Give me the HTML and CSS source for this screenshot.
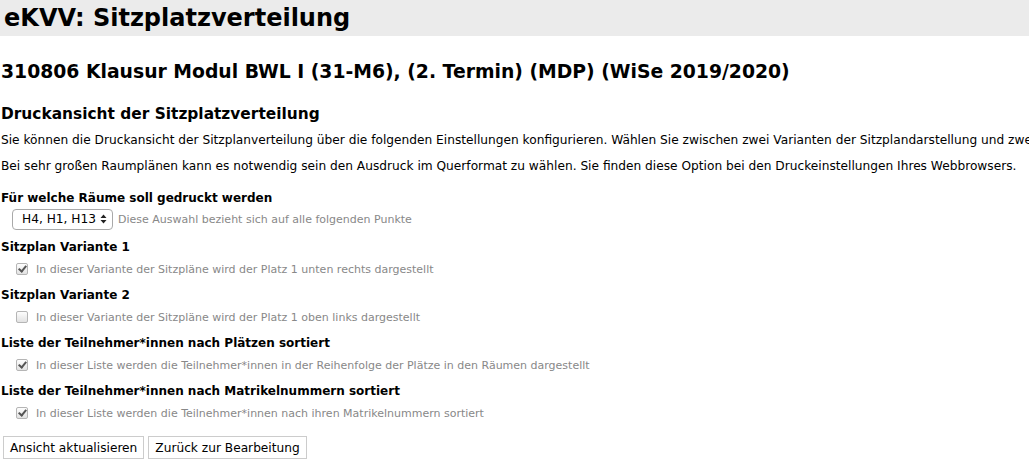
FILE: index.html
```html
<!DOCTYPE html>
<html lang="de">
<head>
    <meta charset="UTF-8">
    <title>eKVV: Sitzplatzverteilung</title>
    <link rel="stylesheet" href="styles.css">
</head>
<body>
    <h1 class="page-title">eKVV: Sitzplatzverteilung</h1>
    <div class="content">
        <h2 class="event-title">310806 Klausur Modul BWL I (31-M6), (2. Termin) (MDP) (WiSe 2019/2020)</h2>
        <h3 class="section-title">Druckansicht der Sitzplatzverteilung</h3>
        <p class="info">Sie können die Druckansicht der Sitzplanverteilung über die folgenden Einstellungen konfigurieren. Wählen Sie zwischen zwei Varianten der Sitzplandarstellung und zwei Listen der Teilnehmer*innen.</p>
        <p class="info">Bei sehr großen Raumplänen kann es notwendig sein den Ausdruck im Querformat zu wählen. Sie finden diese Option bei den Druckeinstellungen Ihres Webbrowsers.</p>

        <form class="print-form">
            <div class="option">
                <div class="option-label">Für welche Räume soll gedruckt werden</div>
                <div class="option-row">
                    <span class="select-box">H4, H1, H13
                        <svg width="7" height="10" viewBox="0 0 7 10"><path d="M3.5 0.5 L6.5 4 H0.5 Z M3.5 9.5 L6.5 6 H0.5 Z" fill="#222"/></svg>
                    </span>
                    <span class="hint">Diese Auswahl bezieht sich auf alle folgenden Punkte</span>
                </div>
            </div>
            <div class="option">
                <div class="option-label">Sitzplan Variante 1</div>
                <label class="check-row"><span class="check on"></span><span class="hint">In dieser Variante der Sitzpläne wird der Platz 1 unten rechts dargestellt</span></label>
            </div>
            <div class="option">
                <div class="option-label">Sitzplan Variante 2</div>
                <label class="check-row"><span class="check"></span><span class="hint">In dieser Variante der Sitzpläne wird der Platz 1 oben links dargestellt</span></label>
            </div>
            <div class="option">
                <div class="option-label">Liste der Teilnehmer*innen nach Plätzen sortiert</div>
                <label class="check-row"><span class="check on"></span><span class="hint">In dieser Liste werden die Teilnehmer*innen in der Reihenfolge der Plätze in den Räumen dargestellt</span></label>
            </div>
            <div class="option">
                <div class="option-label">Liste der Teilnehmer*innen nach Matrikelnummern sortiert</div>
                <label class="check-row"><span class="check on"></span><span class="hint">In dieser Liste werden die Teilnehmer*innen nach ihren Matrikelnummern sortiert</span></label>
            </div>
            <div class="buttons">
                <button type="button" class="btn">Ansicht aktualisieren</button>
                <button type="button" class="btn">Zurück zur Bearbeitung</button>
            </div>
        </form>
    </div>
</body>
</html>
```

FILE: styles.css
```css
body { margin: 0; font-family: "DejaVu Sans", Verdana, sans-serif; color: #000; background: #fff; overflow: hidden; }
.page-title { margin: 0; background: #ebebeb; height: 36px; line-height: 37px; padding-left: 4px; font-size: 24px; font-weight: bold; }
.content { padding: 0 1px; }
.event-title { margin: 23px 0 0 0; font-size: 18.8px; font-weight: bold; line-height: 26px; }
.section-title { margin: 19px 0 0 0; font-size: 15.4px; font-weight: bold; line-height: 20px; }
.info { margin: 6px 0 0 0; font-size: 12.2px; line-height: 20px; white-space: nowrap; }
.print-form { margin-top: 12px; }
.option { margin-bottom: 4px; }
.option-label { font-size: 12px; font-weight: bold; line-height: 20px; }
.option-row { display: flex; align-items: center; gap: 5px; padding-left: 11px; height: 22px; margin-bottom: 7px; }
.select-box { display: inline-flex; align-items: center; gap: 4px; height: 19px; padding: 0 5px 0 9px; border: 1px solid #a9a9a9; border-radius: 4px; font-size: 12.2px; background: #fff; }
.hint { font-size: 11px; color: #888; white-space: nowrap; }
.check-row { display: flex; align-items: center; gap: 8px; padding-left: 15px; height: 24px; }
.check { width: 10px; height: 10px; border: 1px solid #b5b5b5; border-radius: 2px; background: linear-gradient(#fdfdfd, #e2e2e2); position: relative; }
.check.on::after { content: ""; position: absolute; left: 3px; top: 0px; width: 3px; height: 6px; border: solid #555; border-width: 0 2px 2px 0; transform: rotate(40deg); }
.buttons { display: flex; gap: 4px; margin-top: 11px; padding-left: 2px; }
.btn { margin: 0; font-family: "DejaVu Sans", Verdana, sans-serif; font-size: 12.2px; height: 23px; padding: 0 6px; border: 1px solid #ccc; background: #fff; color: #000; }
```
